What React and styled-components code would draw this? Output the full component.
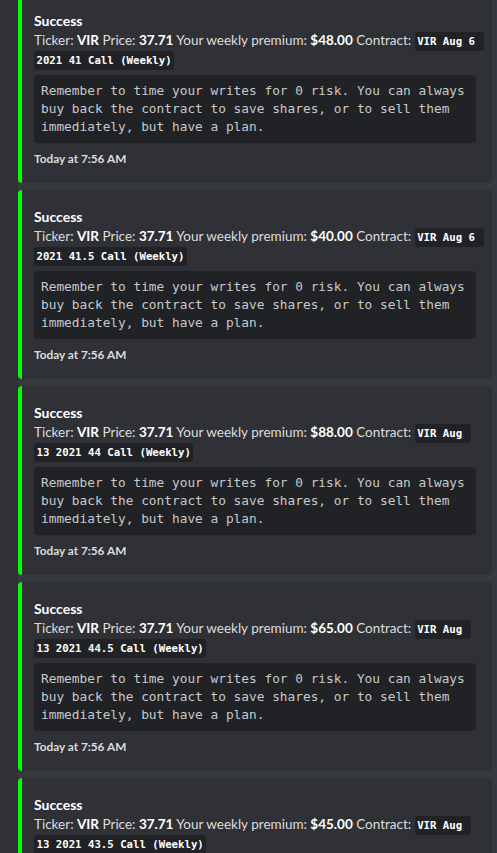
import React from "react";
import styled, { createGlobalStyle } from "styled-components";

const Global = createGlobalStyle`
  html, body { margin: 0; padding: 0; background: #2f3136; overflow: hidden; }
  body { font-family: Lato, "Noto Sans", sans-serif; }
`;

const Page = styled.div`
  width: 497px;
  height: 853px;
  overflow: hidden;
  display: flex;
  background: #2f3136;
`;

const Column = styled.div`
  margin-left: 18px;
  flex: 1;
  background: #36393f;
  display: flex;
  flex-direction: column;
  gap: 7px;
  margin-top: -6px;
`;

const Embed = styled.div`
  width: 474px;
  box-sizing: border-box;
  background: #2f3136;
  border-left: 4px solid #00ff00;
  border-radius: 4px;
  padding: 17px 16px 16px 12px;
  flex-shrink: 0;
`;

const Title = styled.div`
  color: #ffffff;
  font-size: 14px;
  font-weight: 700;
  line-height: 20px;
`;

const Description = styled.div`
  color: #dcddde;
  font-size: 13.5px;
  line-height: 19px;
  white-space: nowrap;
`;

const Strong = styled.b`
  color: #ffffff;
  font-weight: 700;
`;

const InlineCode = styled.code`
  font-family: "DejaVu Sans Mono", monospace;
  font-size: 10.7px;
  font-weight: 700;
  line-height: 0;
  color: #ffffff;
  background: #202225;
  border-radius: 3px;
  padding: 3px 2.5px 3px;
  white-space: pre;
`;

const CodeBlock = styled.pre`
  margin: 6px 0 0;
  background: #202225;
  border-radius: 4px;
  padding: 7px 7px 7px;
  font-family: "DejaVu Sans Mono", monospace;
  font-size: 12.8px;
  line-height: 18px;
  color: #c7c9cb;
  white-space: pre-wrap;
`;

const Footer = styled.div`
  margin-top: 8px;
  color: #dcddde;
  font-size: 11.8px;
  font-weight: 700;
  line-height: 16px;
`;

const data = [
  { premium: "$48.00", c1: "VIR Aug 6", c2: "2021 41 Call (Weekly)" },
  { premium: "$40.00", c1: "VIR Aug 6", c2: "2021 41.5 Call (Weekly)" },
  { premium: "$88.00", c1: "VIR Aug", c2: "13 2021 44 Call (Weekly)" },
  { premium: "$65.00", c1: "VIR Aug", c2: "13 2021 44.5 Call (Weekly)" },
  { premium: "$45.00", c1: "VIR Aug", c2: "13 2021 43.5 Call (Weekly)" },
];

const note =
  "Remember to time your writes for 0 risk. You can always buy back the contract to save shares, or to sell them immediately, but have a plan.";

export default function App() {
  return (
    <>
      <Global />
      <Page>
        <Column>
          {data.map((d, i) => (
            <Embed key={i}>
              <Title>Success</Title>
              <Description>
                Ticker: <Strong>VIR</Strong> Price: <Strong>37.71</Strong> Your weekly premium:{" "}
                <Strong>{d.premium}</Strong> Contract: <InlineCode>{d.c1 + " "}</InlineCode>
                <br />
                <InlineCode>{d.c2}</InlineCode>
              </Description>
              <CodeBlock>{note}</CodeBlock>
              <Footer>Today at 7:56 AM</Footer>
            </Embed>
          ))}
        </Column>
      </Page>
    </>
  );
}
